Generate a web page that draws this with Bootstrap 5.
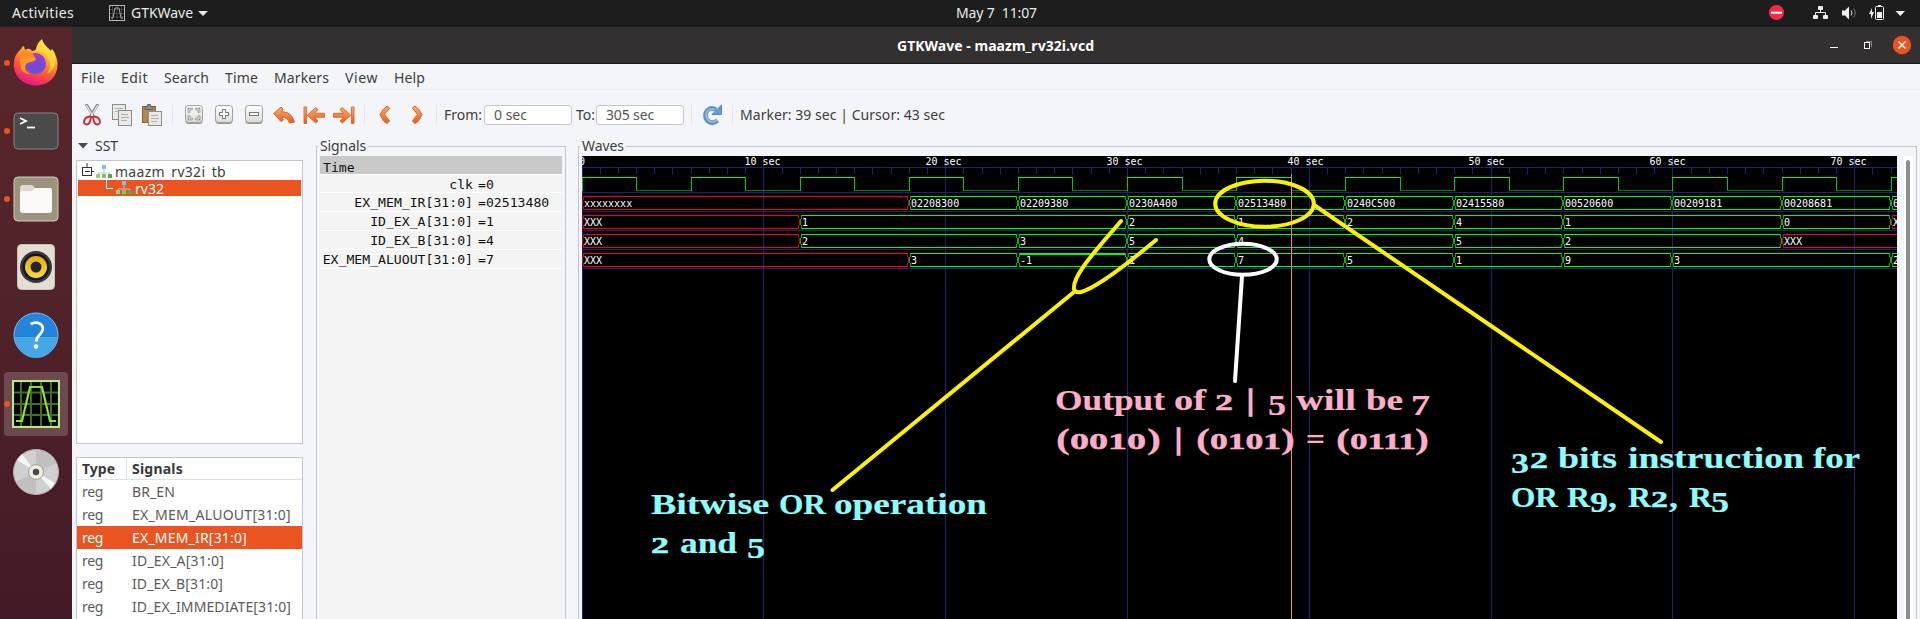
<!DOCTYPE html>
<html lang="en">
<head>
<meta charset="utf-8">
<title>GTKWave - maazm_rv32i.vcd</title>
<link href="https://cdn.jsdelivr.net/npm/bootstrap@5.3.0/dist/css/bootstrap.min.css" rel="stylesheet">
<style>
body{width:1920px;height:619px;overflow:hidden;font-family:"Noto Sans","Open Sans",sans-serif;font-size:14px;line-height:20px;color:#3d3d3d;background:#f4f5f8}
[data-w]{display:inline-block;white-space:pre}
svg{display:block;flex:none}
.topbar{height:27px;background:#1d1d1d;color:#ebebeb;padding-left:12px}
.topbar>*{flex:none}
.dock{width:72px;height:592px;background:linear-gradient(#57262b,#51232a 45%,#431a27);padding-top:3.6px;gap:4.2px}
.dock-cell{width:64px;height:64px;border-radius:4px;flex:none;display:flex;align-items:center;justify-content:center;position:relative}
.dock-cell.active{background:#6d4a50}
.dock-cell.running::before{content:"";position:absolute;left:0;top:29px;width:6px;height:6px;border-radius:50%;background:#e95420}
.titlebar{height:37px;background:#333031;border-bottom:1px solid #1b1919;color:#fff;font-weight:700}
.menus{height:26px;border-bottom:1px solid #ebebed;padding:2px 0 0 9px;gap:16px}
.tools{height:45px;padding:7px 0 0 5px}
.tools>*{flex:none}
.cell{width:30px;height:24px;display:flex;align-items:center;justify-content:center}
.vsep{width:1px;height:20px;background:#e6e7ea}
.entry{width:88px;height:20px;border:1px solid #c3c7cf;border-radius:3px;background:#fff;color:#555;padding-left:9px;line-height:18px}
.body-row{height:484px}
.left-col{width:232px;padding-left:4px}
.sst{height:25px;padding:0 0 3px 2px;gap:7px}
.tree{width:227px;height:284px;border:1px solid #c1c5cd;background:#fff;padding:1px}
.tree-row{height:18px;padding-left:4px}
.tree-row.sel{height:16px;background:#e95420;color:#fff;padding-left:25px}
.sigs{width:227px;height:163px;margin-top:13px;border:1px solid #c1c5cd;border-bottom:0;background:#fff;color:#5b5b5b}
.sigs .hd{height:22px;border-bottom:1px solid #e0e0e2;color:#3a3a3a;font-weight:700}
.sigs .rw{height:23px}
.sigs .rw.sel{background:#e95420;color:#fff}
.c-type{width:50px;padding-left:5px;flex:none}
.c-name{padding-left:5px}
.hd .c-type{border-right:1px solid #e0e0e2;height:22px;width:50px}
.hd span{padding-top:1px}
.framed{position:relative;margin-top:11px;height:480px;border:1px solid #c1c5cd;border-bottom:0}
.legend-text{position:absolute;left:1px;top:-11px;background:#f4f5f8;padding:0 2px}
.mono-list{margin:9px 3px 0 3px;width:242px;font:13.15px/20px "DejaVu Sans Mono",monospace;color:#111}
.mono-list>div{border-bottom:1px solid #fff;background:#f4f4f4;height:19px}
.mono-list .nm{width:155px;text-align:right;padding-right:2px}
.mono-list .vl{padding-left:3px}
.wave-text{font:10px "DejaVu Sans Mono",monospace;fill:#fff}
.note{font:bold 30px "Liberation Serif",serif}
.vscroll{width:9px;margin-left:7px;background:#fff;padding:4px 3px 0 2px}
.vscroll>div{background:#8c8c8c;border-radius:3px 3px 0 0;height:100%}
</style>
</head>
<body>
<svg width="0" height="0" class="position-absolute">
  <defs>
    <linearGradient id="or" x1="0" y1="0" x2="0" y2="1"><stop offset="0" stop-color="#f5b469"/><stop offset="1" stop-color="#ea5a1c"/></linearGradient>
    <linearGradient id="bt" x1="0" y1="0" x2="0" y2="1"><stop offset="0" stop-color="#fff"/><stop offset="1" stop-color="#d9dad6"/></linearGradient>
    <linearGradient id="fx" x1=".75" y1="0" x2=".35" y2="1"><stop offset="0" stop-color="#fff44f"/><stop offset=".35" stop-color="#ffb02e"/><stop offset=".65" stop-color="#ff5a36"/><stop offset="1" stop-color="#e4128a"/></linearGradient>
    <linearGradient id="fp" x1="0" y1="0" x2="0" y2="1"><stop offset="0" stop-color="#a336d8"/><stop offset="1" stop-color="#5a55d6"/></linearGradient>
    <linearGradient id="yl" x1="0" y1="0" x2="0" y2="1"><stop offset="0" stop-color="#e5ab12"/><stop offset="1" stop-color="#ffd83c"/></linearGradient>
    <g id="node"><path d="M8 4v4M2 10V8h12v2" fill="none" stroke="#c3c5c3"/><rect x="6" y="0" width="4" height="4" fill="#8fb9e6"/><rect x="0" y="9" width="4" height="4" fill="#93cf93"/><rect x="6" y="9" width="4" height="4" fill="#7cc67c"/><rect x="12" y="9" width="4" height="4" fill="#4dac4d"/></g>
    <g id="btn"><rect x=".5" y="2" width="17" height="17" rx="3" fill="#999a96"/><rect x=".5" y=".5" width="17" height="17" rx="3" fill="url(#bt)" stroke="#a0a19d"/></g>
    <g id="bararrow"><path d="M1 1h2.600v16.500H1zM21.500 7.300H11.500l3.500-3.800-2.300-2L4.300 9.200l8.400 7.800 2.300-2-3.500-3.800h10z" fill="url(#or)" stroke="#d9632a" stroke-width=".9" stroke-linejoin="round"/></g>
    <path id="chev" d="M8 1l2.700 2L5.500 9.500l5.200 6.500-2.700 2.500L4.500 16 1 9.500 4.500 4z" fill="url(#or)" stroke="#d8571d" stroke-width=".9" stroke-linejoin="round"/>
  </defs>
</svg>

<div class="topbar d-flex align-items-center">
  <span data-w="62" style="margin-top:-1px">Activities</span>
  <svg width="16" height="16" style="margin:-1px 6px 0 35px" viewBox="0 0 16 16"><rect x=".5" y=".5" width="15" height="15" fill="#111" stroke="#bbb"/><path d="M3.500 1v14M8 1v14M12.500 1v14M1 4.500h14M1 8.500h14M1 12h14" stroke="#444"/><path d="M2 13h2l2-10h4l2 10h2" fill="none" stroke="#aaa"/></svg>
  <span data-w="62" style="margin-top:-1px">GTKWave</span>
  <svg width="10" height="5" style="margin:0 0 0 5px"><path d="M0 0h10L5 5z" fill="#e8e8e8"/></svg>
  <span data-w="81" style="margin:-1px 0 0 748px">May 7  11:07</span>
  <svg width="160" height="27" viewBox="1760 0 160 27" style="margin-left:723px"><circle cx="1776.500" cy="12.500" r="7.600" fill="#f32b43"/><rect x="1771" y="11.700" width="11" height="2" fill="#fff"/>
    <g fill="#f0f0f0"><rect x="1818" y="6" width="5" height="4" rx="1"/><rect x="1813" y="15" width="5" height="4" rx="1"/><rect x="1823" y="15" width="5" height="4" rx="1"/><path d="M1842 10.500h3l4-4v13l-4-4h-3z"/><path d="M1872 8l-3 6h2v5l3-7h-2z"/><rect x="1877" y="12" width="5" height="6"/><rect x="1878" y="5" width="3" height="2"/><path d="M1895.500 11h9.500l-4.700 5z"/></g>
    <path d="M1820.500 10v3M1815.500 15v-2.500h10v2.500" fill="none" stroke="#eee"/><path d="M1851 10.500q2 2.500 0 5" fill="none" stroke="#ddd"/><path d="M1853.500 8.500q3.500 4.500 0 9" fill="none" stroke="#777"/><rect x="1875.500" y="6.500" width="8" height="13" rx="1" fill="none" stroke="#eee"/></svg>
</div>

<div class="d-flex">
  <nav class="dock d-flex flex-column align-items-center flex-shrink-0">
    <div class="dock-cell running"><svg width="46" height="48" viewBox="0 0 46 48"><path d="M8 10q1-3 3-3l1 4q3-2 5-1l2 2q3 0 4-2Q24 4 29 0q1 5 6 9 2 2 3 3l1-2q5 7 5.500 14C45 37 36 46.500 23 46.500S1 37 .700 26Q.500 16 8 10z" fill="url(#fx)"/><path d="M29 1q-6 6-5 11 8 0 11 7 5 8-1 16 10-5 8-19-1-4-3-6l-1 2Q31 6 29 1z" fill="#ffdf3c" opacity=".75"/><circle cx="22.500" cy="24.500" r="10.500" fill="url(#fp)"/><path d="M7 20q5-3 14-1 2 0 2 1-1 3-6 3-4 1-5 4-1 6 6 8-8 0-10-6-1-4-1-9z" fill="#ff9a21"/><path d="M5 14q5-3 10-2 5 2 8 8-8-2-14 0z" fill="#ff8c26"/></svg></div>
    <div class="dock-cell running"><svg width="46" height="38"><rect x="1" y="1" width="44" height="36" rx="4" fill="#4a4a4a" stroke="#858585"/><path d="M7 6l6 3-6 3" fill="none" stroke="#fff" stroke-width="1.800"/><path d="M14 15.500h8" stroke="#fff" stroke-width="1.800"/></svg></div>
    <div class="dock-cell running"><svg width="46" height="46"><rect x="1" y="1" width="44" height="44" rx="4" fill="#9c937e" stroke="#d2cdc0"/><path d="M7 12q0-3 3-3h9l3 3h14q3 0 3 3v5H7z" fill="#dedad0"/><path d="M7 18q0-3 3-3h9l3-3h15q2 0 2 3v19q0 3-3 3H10q-3 0-3-3z" fill="#faf9f7"/></svg></div>
    <div class="dock-cell"><svg width="38" height="46"><rect x=".5" y=".5" width="37" height="45" rx="4" fill="#e2ded4" stroke="#c9c3b8"/><circle cx="19" cy="23" r="16" fill="#373a44"/><circle cx="19" cy="23" r="13.500" fill="#17181f"/><circle cx="19" cy="23" r="11" fill="url(#yl)"/><circle cx="19" cy="23" r="5.500" fill="#23242a"/></svg></div>
    <div class="dock-cell"><svg width="46" height="46"><circle cx="23" cy="23" r="22" fill="#2484db" stroke="#82bff0"/><path d="M2 25h42a21 21 0 0 1-42 0z" fill="#45a7e6"/><path d="M17.500 12q5-2.500 9-.500 4.500 2.500 3 7-.800 2-3.500 5-2.800 3-2.800 6" fill="none" stroke="#fff" stroke-width="2.700"/><circle cx="23" cy="34.500" r="2.300" fill="#fff"/></svg></div>
    <div class="dock-cell active running"><svg width="48" height="48"><rect x="1" y="1" width="46" height="46" fill="#000" stroke="#b9e986" stroke-width="2.200"/><path d="M9 2v44M19 2v44M29 2v44M39 2v44M2 12.500h44M2 24h44M2 35h44" stroke="#43701c" stroke-width="2"/><path d="M4 41h6L18 7h12l8 34h6" fill="none" stroke="#8ae234" stroke-width="2.200"/></svg></div>
    <div class="dock-cell"><svg width="46" height="46"><circle cx="23" cy="23" r="22.500" fill="#d0d0d0" stroke="#b5b5b5"/><path d="M23 23V.500a22.500 22.500 0 0 1 20 14zM23 23v22.500a22.500 22.500 0 0 1-20-13z" fill="#c0c0c0"/><path d="M23 23L4 11l5-6zM23 23l19 11-4 6z" fill="#f5f5f5"/><circle cx="23" cy="23" r="7.500" fill="#efede8" stroke="#aaa183"/><circle cx="23" cy="23" r="3.200" fill="#4a4a4a"/></svg></div>
  </nav>

  <main style="width:1848px">
    <div class="titlebar d-flex">
      <span data-w="197" style="margin:9px 0 0 825px">GTKWave - maazm_rv32i.vcd</span>
      <svg width="98" height="36" viewBox="1822 27 98 36" style="margin-left:728px"><path d="M1830 47.500h8" stroke="#fff"/><rect x="1864.500" y="42.500" width="5" height="6" fill="none" stroke="#fff"/><path d="M1866 41.500h5.500V47" fill="none" stroke="#8d8b8b"/><circle cx="1902" cy="45" r="9.200" fill="#e95420"/><path d="M1898.500 41.500l7 7m0-7l-7 7" stroke="#fff" stroke-width="1.500"/></svg>
    </div>
    <div class="menus d-flex align-items-center">
      <span data-w="24">File</span><span data-w="27">Edit</span><span data-w="45">Search</span><span data-w="33">Time</span><span data-w="55">Markers</span><span data-w="33">View</span><span data-w="31">Help</span>
    </div>
    <div class="tools d-flex">
      <div class="d-flex align-items-center" style="height:36px">
        <span class="cell"><svg width="18" height="22"><path d="M3 0l8 13M15 0L7 13" stroke="#8c8e8a" stroke-width="3"/><path d="M3.300 1l7 12M14.700 1l-7 12" stroke="#e4e5e3" stroke-width="1.300"/><path d="M8 13q-5-1-6.500 3t2 4.500T8 13zm2 0q5-1 6.500 3t-2 4.500T10 13z" fill="none" stroke="#cc3038" stroke-width="2"/></svg></span>
        <span class="cell"><svg width="20" height="22"><g fill="#e9eae8" stroke="#8b8d88"><rect x=".5" y=".5" width="13" height="15"/><rect x="6.500" y="6.500" width="13" height="15"/></g><path d="M3 4.500h8M3 7.500h3M9 10.500h7M9 13.500h8M9 16.500h6" stroke="#b0b2ae"/></svg></span>
        <span class="cell"><svg width="20" height="22"><rect x=".5" y="2.500" width="13" height="16" fill="#b28751" stroke="#8d6534"/><path d="M3 2.500h2L5.500.500h3l.5 2h2v3H3z" fill="#888a85" stroke="#666"/><rect x="6.500" y="7.500" width="13" height="14" fill="#e9eae8" stroke="#8b8d88"/><path d="M9 11.500h7M9 14.500h8M9 17.500h6" stroke="#b0b2ae"/></svg></span>
        <i class="vsep" style="margin:0 6px 0 5px"></i>
        <span class="cell"><svg width="18" height="20"><use href="#btn"/><path d="M4 7.500V4h3.500M10.500 4H14v3.500M14 10.500V14h-3.500M7.500 14H4v-3.500" fill="none" stroke="#777" stroke-width="2.600"/><path d="M4 7V4h3M11 4h3v3M14 11v3h-3M7 14H4v-3" fill="none" stroke="#fff" stroke-width="1"/></svg></span>
        <span class="cell"><svg width="18" height="20"><use href="#btn"/><path d="M7.500 4.500h3v3h3v3h-3v3h-3v-3h-3v-3h3z" fill="#fff" stroke="#777"/></svg></span>
        <span class="cell"><svg width="18" height="20"><use href="#btn"/><rect x="4.500" y="7.500" width="9" height="3" fill="#fff" stroke="#777"/></svg></span>
        <span class="cell"><svg width="22" height="18"><path d="M.700 7.500L8 1l2 2-1.500 3q6-.5 9.500 3.500 2.500 3 3.500 6.500l-5 1q-2-6-8-6l1.800 3L8 15.500z" fill="url(#or)" stroke="#d9632a" stroke-linejoin="round"/></svg></span>
        <span class="cell"><svg width="22" height="19"><use href="#bararrow"/></svg></span>
        <span class="cell"><svg width="22" height="19"><use href="#bararrow" transform="matrix(-1 0 0 1 22 0)"/></svg></span>
        <i class="vsep" style="margin:0 7px 0 5px"></i>
        <span class="cell" style="width:26px"><svg width="12" height="20"><use href="#chev"/></svg></span>
        <span class="cell" style="width:38px"><svg width="12" height="20"><use href="#chev" transform="matrix(-1 0 0 1 12 0)"/></svg></span>
        <i class="vsep"></i>
        <span data-w="38" style="margin:0 0 0 7px">From:</span>
        <div class="entry" style="margin-left:2px"><span data-w="33">0 sec</span></div>
        <span data-w="19" style="margin:0 1px 0 4px">To:</span>
        <div class="entry"><span data-w="48">305 sec</span></div>
        <i class="vsep" style="margin:0 9px 0 7px"></i>
        <svg width="22" height="22"><path d="M16.500 16.500Q11 21 6.300 16.500 2.800 12 6 6.800q4-4.300 9-1" fill="none" stroke="#5b8fc9" stroke-width="4.600"/><path d="M11 10.500h9.500V1z" fill="#6b9dd5" stroke="#5084c0"/><path d="M16 16Q11 20 7 16 3.500 12 6.500 7q3.500-3.500 7.500-1" fill="none" stroke="#8db8e4" stroke-width="2"/></svg>
        <i class="vsep" style="margin:0 7px 0 9px"></i>
        <span data-w="205">Marker: 39 sec | Cursor: 43 sec</span>
      </div>
    </div>

    <div class="body-row d-flex">
      <div class="left-col flex-shrink-0">
        <div class="sst d-flex align-items-center"><svg width="10" height="6"><path d="M0 0h10L5 5.500z" fill="#4a4a4a"/></svg><span data-w="23">SST</span></div>
        <div class="tree">
          <div class="tree-row d-flex align-items-center"><svg width="12" height="16"><path d="M5 0v4M9.500 8.500H12" stroke="#333"/><rect x=".5" y="4.500" width="9" height="8" fill="#fff" stroke="#333"/><path d="M3 8.500h5" stroke="#333"/></svg><svg width="16" height="14" style="margin:2px 3px 0 2px"><use href="#node"/></svg><span data-w="111" style="margin-top:1px">maazm<span style="color:transparent">_</span>rv32i<span style="color:transparent">_</span>tb</span></div>
          <div class="tree-row sel d-flex align-items-center"><svg width="13" height="16"><path d="M3.500 0v8.500H10" fill="none" stroke="#fff"/></svg><svg width="16" height="14" style="margin:0 3px 0 0"><use href="#node"/></svg><span data-w="29" style="margin-top:1px">rv32</span></div>
        </div>
        <div class="sigs">
          <div class="hd d-flex"><div class="c-type"><span data-w="33">Type</span></div><div class="c-name"><span data-w="51">Signals</span></div></div>
          <div class="rw d-flex align-items-center"><div class="c-type"><span data-w="21">reg</span></div><div class="c-name"><span data-w="43">BR_EN</span></div></div>
          <div class="rw d-flex align-items-center"><div class="c-type"><span data-w="21">reg</span></div><div class="c-name"><span data-w="159">EX_MEM_ALUOUT[31:0]</span></div></div>
          <div class="rw sel d-flex align-items-center"><div class="c-type"><span data-w="21">reg</span></div><div class="c-name"><span data-w="115">EX_MEM_IR[31:0]</span></div></div>
          <div class="rw d-flex align-items-center"><div class="c-type"><span data-w="21">reg</span></div><div class="c-name"><span data-w="92">ID_EX_A[31:0]</span></div></div>
          <div class="rw d-flex align-items-center"><div class="c-type"><span data-w="21">reg</span></div><div class="c-name"><span data-w="91">ID_EX_B[31:0]</span></div></div>
          <div class="rw d-flex align-items-center"><div class="c-type"><span data-w="21">reg</span></div><div class="c-name"><span data-w="159">ID_EX_IMMEDIATE[31:0]</span></div></div>
        </div>
      </div>

      <section class="framed flex-shrink-0" style="width:250px;margin-left:12px">
        <span class="legend-text"><span data-w="46">Signals</span></span>
        <div class="mono-list">
          <div style="background:#c9c9c9;padding:3px 0 0 3px;line-height:17px">Time</div>
          <div class="d-flex" style="height:18px"><span class="nm">clk</span><span class="vl">=0</span></div>
          <div class="d-flex"><span class="nm">EX_MEM_IR[31:0]</span><span class="vl">=02513480</span></div>
          <div class="d-flex"><span class="nm">ID_EX_A[31:0]</span><span class="vl">=1</span></div>
          <div class="d-flex"><span class="nm">ID_EX_B[31:0]</span><span class="vl">=4</span></div>
          <div class="d-flex"><span class="nm">EX_MEM_ALUOUT[31:0]</span><span class="vl">=7</span></div>
          <div style="height:360px"></div>
        </div>
      </section>

      <section class="framed flex-shrink-0" style="width:1339px;margin-left:12px">
        <span class="legend-text"><span data-w="42">Waves</span></span>
        <div class="d-flex" style="margin:9px 0 0 3px;height:463px">
          <svg id="waves" width="1315" height="463" viewBox="582 156 1315 463" style="background:#000"></svg>
          <div class="vscroll"><div></div></div>
        </div>
      </section>
    </div>
  </main>
</div>

<script src="https://cdn.jsdelivr.net/npm/bootstrap@5.3.0/dist/js/bootstrap.bundle.min.js"></script>
<script>
// Space each label to its intended width
document.querySelectorAll('[data-w]').forEach(function (el) {
  var n = el.textContent.length, w = el.getBoundingClientRect().width;
  el.style.letterSpacing = ((+el.dataset.w - w) / n).toFixed(3) + 'px';
});

// Waveform canvas
var X = function (t) { return Math.floor(582 + 18.183 * t); }, o = '';
function seg(x1, y1, x2, y2, c) {
  return x1 === x2 ? '<rect x="' + x1 + '" y="' + y1 + '" width="1" height="' + (y2 - y1) + '" fill="' + c + '"/>'
                   : '<rect x="' + x1 + '" y="' + y1 + '" width="' + (x2 - x1) + '" height="1" fill="' + c + '"/>';
}
function txt(x, y, s) { return '<text class="wave-text" x="' + x + '" y="' + y + '">' + s + '</text>'; }
var grid = '#202078';
[167, 192, 211, 230, 249, 268].forEach(function (y) { o += seg(582, y, 1897, y, grid); });
for (var t = 0; t <= 72; t++) o += t % 10 ? seg(X(t), 168, X(t), 174, grid) : seg(X(t), 156, X(t), 619, grid);
o += txt(579, 165, '0');
for (t = 10; t <= 70; t += 10) o += txt(563.5 + 18.1 * t, 165, t + ' sec');
for (t = 0; t <= 72; t += 6) {
  o += seg(X(t), 177, X(t), 191, '#00c800') + seg(X(t), 177, Math.min(X(t + 3), 1897), 177, '#00ff00');
  if (t < 72) o += seg(X(t + 3), 177, X(t + 3), 191, '#00c800') + seg(X(t + 3), 190, X(t + 6), 190, '#008200');
}
var rows = [
  [196, [[0, 'xxxxxxxx'], [18, '02208300'], [24, '02209380'], [30, '0230A400'], [36, '02513480'], [42, '0240C500'], [48, '02415580'], [54, '00520600'], [60, '00209181'], [66, '00208681'], [72, '0']]],
  [215, [[0, 'XXX'], [12, '1'], [30, '2'], [36, '1'], [42, '2'], [48, '4'], [54, '1'], [66, '0'], [72, 'X']]],
  [234, [[0, 'XXX'], [12, '2'], [24, '3'], [30, '5'], [36, '4'], [48, '5'], [54, '2'], [66, 'XXX']]],
  [253, [[0, 'XXX'], [18, '3'], [24, '-1'], [30, '1'], [36, '7'], [42, '5'], [48, '1'], [54, '9'], [60, '3'], [72, '2']]]
];
rows.forEach(function (r) {
  var y = r[0];
  r[1].forEach(function (v, i) {
    var a = X(v[0]), b = r[1][i + 1] ? X(r[1][i + 1][0]) : 1902, red = /x/i.test(v[1]);
    var c = red ? '#ff0000' : '#00ff00', d = red ? '#d80000' : '#00b800';
    o += seg(a + 2, y, b - 1, y, c) + seg(a + 2, y + 13, b - 1, y + 13, c);
    if (v[1] === '-1') o += seg(a + 2, y + 1, b - 1, y + 1, c);
    o += '<path shape-rendering="crispEdges" fill="none" stroke="' + d + '" d="M' + (a + 1.5) + ' ' + y + 'v3l-1 2v4l1 2v3M' + (b - 1.5) + ' ' + y + 'v3l1 2v4l-1 2v3"/>';
    o += txt(a + 2, y + 11, v[1]);
  });
});
o += seg(1291, 174, 1291, 619, '#f08080');

// Annotations
o += '<g fill="none" stroke-linecap="round" stroke-width="4"><g stroke="#fff200"><ellipse cx="1264.500" cy="203.700" rx="49.300" ry="23"/><path d="M1314 205L1661 442M1121 221C1100 246 1072 275 1074 289Q1075 293 1081 292C1096 288 1132 260 1156 240M1074 292L832.500 490"/></g><g stroke="#fff"><ellipse cx="1243" cy="259.300" rx="33.700" ry="15.500"/><path d="M1242 276L1235 381"/></g></g>';
// run: text, start, end, figure style (l = x-height figure, d = descending figure, b = bar)
var notes = [
  ['#8efdfd', 514, [['Bitwise', 651, 769], ['OR', 779, 826], ['operation', 834, 987]]],
  ['#8efdfd', 553, [['2', 651, 669, 'l'], ['and', 680, 737], ['5', 747, 765, 'd']]],
  ['#ffaec9', 410, [['Output', 1055, 1165], ['of', 1174, 1206], ['2', 1215, 1233, 'l'], ['|', 1247, 1254, 'b'], ['5', 1268, 1286, 'd'], ['will', 1296, 1356], ['be', 1366, 1403], ['7', 1411, 1430, 'd']]],
  ['#ffaec9', 448.5, [['(', 1056, 1070], ['0010', 1070, 1146, 'l'], [')', 1147, 1161], ['|', 1175, 1182, 'b'], ['(', 1196, 1210], ['0101', 1210, 1281, 'l'], [')', 1281, 1295], ['=', 1306, 1325], ['(', 1336, 1350], ['0111', 1350, 1416, 'l'], [')', 1415, 1429]]],
  ['#8efdfd', 468, [['3', 1511, 1529, 'd'], ['2', 1530, 1548, 'l'], ['bits', 1558, 1617], ['instruction', 1628, 1804], ['for', 1813, 1860]]],
  ['#8efdfd', 507, [['OR', 1511, 1558], ['R', 1567, 1590], ['9', 1590, 1608, 'd'], [',', 1608, 1617], ['R', 1628, 1651], ['2', 1651, 1668, 'l'], [',', 1669, 1678], ['R', 1689, 1712], ['5', 1711, 1729, 'd']]]
];
var look = { l: ' style="font-size:24px;stroke-width:.5px"', b: ' style="stroke-width:1.4px"' };
notes.forEach(function (n) {
  o += '<text class="note" fill="' + n[0] + '" stroke="' + n[0] + '" stroke-width=".2">';
  n[2].forEach(function (r) {
    o += '<tspan x="' + r[1] + '" y="' + (n[1] + (r[3] === 'd' ? 4.5 : 0)) + '" textLength="' + (r[2] - r[1]) + '" lengthAdjust="spacingAndGlyphs"' + (look[r[3]] || '') + '>' + r[0] + '</tspan>';
  });
  o += '</text>';
});
document.getElementById('waves').innerHTML = o;
</script>
</body>
</html>
